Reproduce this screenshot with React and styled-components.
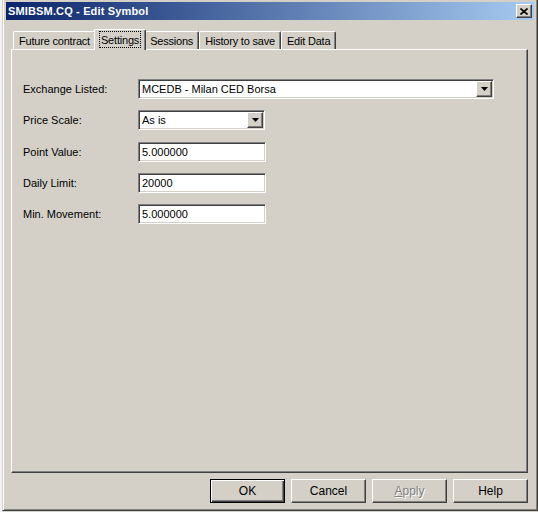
import React from "react";
import styled, { createGlobalStyle, css } from "styled-components";

const Global = createGlobalStyle`
  html, body {
    margin: 0;
    padding: 0;
    background: #ffffff;
    overflow: hidden;
  }
  body {
    font-family: "Liberation Sans", Arial, sans-serif;
    font-size: 11px;
    color: #000;
  }
`;

const raised = css`
  border-style: solid;
  border-width: 1px;
  border-color: #ffffff #404040 #404040 #ffffff;
  box-shadow: inset -1px -1px 0 #808080, inset 1px 1px 0 #d4d0c8;
`;

const sunken = css`
  border-style: solid;
  border-width: 1px;
  border-color: #808080 #ffffff #ffffff #808080;
  box-shadow: inset 1px 1px 0 #404040, inset -1px -1px 0 #d4d0c8;
`;

const Page = styled.div`
  width: 538px;
  height: 512px;
  display: flex;
  background: linear-gradient(to right, #f2f2f2 0, #f2f2f2 2px, #d4d0c8 2px);
`;

const Dialog = styled.div`
  box-sizing: border-box;
  margin-left: 2px;
  width: 536px;
  height: 511px;
  background: #d4d0c8;
  border-style: solid;
  border-width: 0 1px 1px 1px;
  border-color: #d4d0c8 #404040 #404040 #d4d0c8;
  box-shadow: inset 1px 0 0 #ffffff, inset -1px -1px 0 #808080;
  padding: 2px 3px 0 3px;
  display: flex;
  flex-direction: column;
`;

const TitleBar = styled.div`
  height: 18px;
  display: flex;
  align-items: center;
  justify-content: space-between;
  padding: 0 2px 0 2px;
  background: linear-gradient(to right, #0a246a, #a6caf0);
`;

const Title = styled.span`
  font-family: "Liberation Sans", Arial, sans-serif;
  font-weight: bold;
  font-size: 11px;
  color: #ffffff;
  letter-spacing: 0.15px;
`;

const CloseButton = styled.div`
  box-sizing: border-box;
  width: 16px;
  height: 14px;
  background: #d4d0c8;
  ${raised};
  display: flex;
  align-items: center;
  justify-content: center;
`;

const Body = styled.div`
  flex: 1;
  display: flex;
  flex-direction: column;
  padding: 9px 6px 0 5px;
`;

const TabStrip = styled.div`
  height: 20px;
  display: flex;
  align-items: flex-end;
  padding-left: 2px;
  position: relative;
  z-index: 1;
`;

const Tab = styled.div`
  box-sizing: border-box;
  height: ${p => (p.$active ? "21px" : "18px")};
  margin: ${p => (p.$active ? "0 -2px -1px -2px" : "0")};
  padding: ${p => (p.$active ? "2px 5px 0 5px" : "1px 4px 0 4px")};
  background: #d4d0c8;
  border-top: 1px solid #ffffff;
  border-left: 1px solid #ffffff;
  border-right: 1px solid #404040;
  box-shadow: inset -1px 0 0 #808080;
  border-radius: 2px 2px 0 0;
  white-space: nowrap;
  position: relative;
  z-index: ${p => (p.$active ? 2 : 1)};
  display: flex;
  align-items: flex-start;
  font-size: 11px;
  letter-spacing: -0.2px;
`;

const TabLabel = styled.span`
  padding: 1px 1px 0 1px;
  line-height: 14px;
  outline: ${p => (p.$focus ? "1px dotted #000" : "none")};
  outline-offset: 0;
`;

const Panel = styled.div`
  box-sizing: border-box;
  width: 517px;
  height: 424px;
  border-style: solid;
  border-width: 1px;
  border-color: #ffffff #404040 #404040 #ffffff;
  box-shadow: inset -1px -1px 0 #808080;
  padding: 29px 12px 0 11px;
  display: flex;
  flex-direction: column;
`;

const Row = styled.div`
  display: flex;
  align-items: center;
  height: 20px;
  margin-bottom: ${p => p.$gap}px;
`;

const Label = styled.span`
  width: 115px;
  flex: none;
`;

const Field = styled.div`
  box-sizing: border-box;
  width: ${p => p.$w}px;
  height: 20px;
  background: #ffffff;
  ${sunken};
  display: flex;
  align-items: center;
  padding: 0 2px 0 3px;
`;

const FieldText = styled.span`
  flex: 1;
  white-space: nowrap;
  overflow: hidden;
`;

const ArrowButton = styled.div`
  box-sizing: border-box;
  width: 16px;
  height: 16px;
  margin-right: -1px;
  background: #d4d0c8;
  ${raised};
  display: flex;
  align-items: center;
  justify-content: center;
`;

const Footer = styled.div`
  display: flex;
  justify-content: flex-end;
  gap: 6px;
  padding-top: 6px;
`;

const Button = styled.div`
  box-sizing: border-box;
  width: 75px;
  height: 24px;
  background: #d4d0c8;
  display: flex;
  align-items: center;
  justify-content: center;
  ${p =>
    p.$default
      ? css`
          border: 1px solid #000;
          box-shadow: inset 1px 1px 0 #ffffff, inset -1px -1px 0 #404040,
            inset -2px -2px 0 #808080;
        `
      : raised};
  color: ${p => (p.$disabled ? "#808080" : "#000")};
  text-shadow: ${p => (p.$disabled ? "1px 1px 0 #ffffff" : "none")};
  font-size: 12px;
`;

const Arrow = () => (
  <svg width="7" height="4" viewBox="0 0 7 4">
    <path d="M0 0h7L3.5 4z" fill="#000" />
  </svg>
);

const Select = ({ w, value }) => (
  <Field $w={w}>
    <FieldText>{value}</FieldText>
    <ArrowButton>
      <Arrow />
    </ArrowButton>
  </Field>
);

const tabs = ["Future contract", "Settings", "Sessions", "History to save", "Edit Data"];

export default function App() {
  return (
    <>
      <Global />
      <Page>
        <Dialog>
          <TitleBar>
            <Title>SMIBSM.CQ - Edit Symbol</Title>
            <CloseButton>
              <svg width="8" height="7" viewBox="0 0 8 7">
                <path d="M0.5 0.5l7 6M7.5 0.5l-7 6" stroke="#000" strokeWidth="1.6" />
              </svg>
            </CloseButton>
          </TitleBar>
          <Body>
            <TabStrip>
              {tabs.map(t => (
                <Tab key={t} $active={t === "Settings"}>
                  <TabLabel $focus={t === "Settings"}>{t}</TabLabel>
                </Tab>
              ))}
            </TabStrip>
            <Panel>
              <Row $gap={11}>
                <Label>Exchange Listed:</Label>
                <Select w={356} value="MCEDB - Milan CED Borsa" />
              </Row>
              <Row $gap={12}>
                <Label>Price Scale:</Label>
                <Select w={127} value="As is" />
              </Row>
              <Row $gap={11}>
                <Label>Point Value:</Label>
                <Field $w={128}>
                  <FieldText>5.000000</FieldText>
                </Field>
              </Row>
              <Row $gap={11}>
                <Label>Daily Limit:</Label>
                <Field $w={128}>
                  <FieldText>20000</FieldText>
                </Field>
              </Row>
              <Row $gap={0}>
                <Label>Min. Movement:</Label>
                <Field $w={128}>
                  <FieldText>5.000000</FieldText>
                </Field>
              </Row>
            </Panel>
            <Footer>
              <Button $default>OK</Button>
              <Button>Cancel</Button>
              <Button $disabled>
                <span>
                  <u>A</u>pply
                </span>
              </Button>
              <Button>Help</Button>
            </Footer>
          </Body>
        </Dialog>
      </Page>
    </>
  );
}
